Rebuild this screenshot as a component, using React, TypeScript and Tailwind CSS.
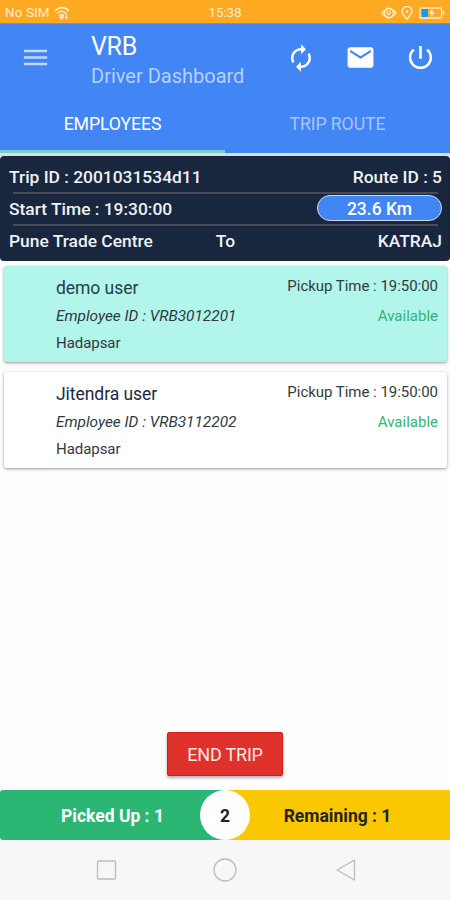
import type { ReactNode } from "react";
import { MdAutorenew, MdEmail, MdMenu, MdPowerSettingsNew } from "react-icons/md";

type Employee = {
  name: string;
  employeeId: string;
  stop: string;
  pickupTime: string;
  status: string;
  pickedUp: boolean;
};

const EMPLOYEES: Employee[] = [
  {
    name: "demo user",
    employeeId: "VRB3012201",
    stop: "Hadapsar",
    pickupTime: "19:50:00",
    status: "Available",
    pickedUp: true,
  },
  {
    name: "Jitendra user",
    employeeId: "VRB3112202",
    stop: "Hadapsar",
    pickupTime: "19:50:00",
    status: "Available",
    pickedUp: false,
  },
];

function StatusBar() {
  return (
    <div className="grid h-6 shrink-0 grid-cols-3 items-center border-b border-[#7b8fb0] bg-[#ffaa22] pt-0.5 pr-[5px] pl-[5px] text-[13.500px] leading-none text-[#ffedcb]">
      <div className="flex items-center gap-1">
        <span className="tracking-[0.1px]">No SIM</span>
        <svg width="16" height="14" viewBox="0 0 16 14" fill="none" stroke="currentColor" strokeWidth="1.6" aria-hidden="true">
          <path d="M1 5c4-4.500 10-4.500 14 0M3.200 7.500c2.800-3 6.300-3 9 0M5.400 9.800c1.500-1.500 3.300-1.500 4.600 0" />
          <path d="M6.300 11L7.700 12.800L9 11z" fill="currentColor" />
          <path d="M12.500 7.500v5M10.900 11l1.600 1.600L14 11" strokeWidth="1" />
        </svg>
      </div>
      <span className="text-center tracking-[-0.1px]">15:38</span>
      <div className="flex items-center justify-end gap-1">
        <svg width="16" height="14" viewBox="0 0 16 14" fill="none" stroke="currentColor" strokeWidth="1.3" aria-hidden="true">
          <circle cx="8" cy="7" r="4.700" strokeWidth="1.8" />
          <path d="M6.500 4.500v3c0 1.500 2.500 1.500 2.500 0V4.500M2.700 4.500L1 7l1.700 2.500M13.300 4.500L15 7l-1.700 2.500" />
        </svg>
        <svg width="12" height="14" viewBox="0 0 12 14" fill="none" stroke="currentColor" strokeWidth="1.4" aria-hidden="true">
          <path d="M6 13C3 9.500 1 7.800 1 5.500a5 5 0 0 1 10 0C11 7.800 9 9.500 6 13z" />
          <circle cx="6" cy="5.500" r="1.300" fill="currentColor" stroke="none" />
        </svg>
        <svg width="26" height="12" viewBox="0 0 26 12" fill="none" className="ml-0.5" aria-hidden="true">
          <rect x="1" y="1" width="21.500" height="10" rx="1" stroke="currentColor" strokeWidth="1.300" />
          <rect x="2.500" y="2" width="6.500" height="8" fill="#159bf3" />
          <path d="M13.500 2L9.500 6.500H12V10l4-4.500h-2.500z" fill="currentColor" />
          <path d="M24.500 4v4" stroke="currentColor" strokeWidth="1.500" />
        </svg>
      </div>
    </div>
  );
}

function Toolbar() {
  return (
    <header className="flex h-[70px] shrink-0 items-center pr-[14px] pb-[3px] pl-5 text-white">
      <MdMenu size={31} className="text-[#c4d9fd]" />
      <div className="ml-10 flex-1 pt-[7px]">
        <h1 className="text-[25px] leading-[30px] tracking-[-0.3px]">VRB</h1>
        <p className="text-[20px] leading-[28px] text-[#b8d0fd]">Driver Dashboard</p>
      </div>
      <div className="flex items-center gap-[30px]">
        <MdAutorenew size={30} />
        <MdEmail size={31} className="-mr-px -ml-px" />
        <MdPowerSettingsNew size={31} />
      </div>
    </header>
  );
}

function Tabs() {
  return (
    <nav className="grid h-[59px] shrink-0 grid-cols-2 text-center text-[17.700px] leading-[52px] tracking-[-0.1px]">
      <div className="border-b-[3px] border-[#7dcbd0] pt-1 text-white">EMPLOYEES</div>
      <div className="pt-1 text-[#a5c5fc]">TRIP ROUTE</div>
    </nav>
  );
}

function TripRow({ children }: { children: ReactNode }) {
  return <div className="flex h-[30px] items-center justify-between">{children}</div>;
}

function TripSummary() {
  return (
    <section className="h-[105px] shrink-0 rounded-[4px] bg-[#18263e] pt-1.5 pr-2 pl-[9px] text-[17.400px] font-medium text-[#f0f1f3]">
      <TripRow>
        <span>Trip ID : 2001031534d11</span>
        <span>Route ID : 5</span>
      </TripRow>
      <div className="mx-1 h-0.5 bg-[#454b58]" />
      <TripRow>
        <span>Start Time : 19:30:00</span>
        <span className="mb-[2px] h-[26px] w-[125px] rounded-full border border-[#cbdcfa] bg-[#4285f4] text-center text-[17.500px] leading-[26px] text-white">
          23.6 Km
        </span>
      </TripRow>
      <div className="mx-1 h-0.5 bg-[#454b58]" />
      <div className="grid h-[30px] grid-cols-[1fr_auto_1fr] items-center">
        <span>Pune Trade Centre</span>
        <span>To</span>
        <span className="text-right">KATRAJ</span>
      </div>
    </section>
  );
}

function EmployeeCard({ employee }: { employee: Employee }) {
  return (
    <article
      className={`flex h-24 justify-between rounded-[3px] pr-[9px] pl-[52px] shadow-[0_1px_3px_rgba(0,0,0,0.4)] ${
        employee.pickedUp ? "bg-[#b1f5eb]" : "bg-white"
      }`}
    >
      <div className="pt-2 text-[#30383e]">
        <h2
          className={`text-[17.500px] leading-[28px] tracking-[-0.05px] ${
            employee.pickedUp ? "text-[#24404a]" : "text-[#20284a]"
          }`}
        >
          {employee.name}
        </h2>
        <p className="text-[15.400px] leading-[28px] italic">Employee ID : {employee.employeeId}</p>
        <p className="text-[15px] leading-[26px] tracking-[-0.05px]">{employee.stop}</p>
      </div>
      <div className="pt-[7px] text-right text-[15px] text-[#333b40]">
        <p className="leading-[27px] tracking-[-0.03px]">Pickup Time : {employee.pickupTime}</p>
        <p className="pt-px leading-[31px] text-[#35b477]">{employee.status}</p>
      </div>
    </article>
  );
}

function TripTotals() {
  return (
    <div className="relative grid h-[50px] shrink-0 grid-cols-2 text-center text-[17.500px] leading-[48px] font-bold">
      <div className="rounded-l-[3px] bg-[#2bb673] pt-[2px] text-white">Picked Up : 1</div>
      <div className="bg-[#f9c802] pt-[2px] text-[#272312]">Remaining : 1</div>
      <div className="absolute left-1/2 h-[50px] w-[50px] -translate-x-1/2 rounded-full bg-white pt-[2px] text-[#202020]">
        2
      </div>
    </div>
  );
}

function NavigationBar() {
  return (
    <div className="flex h-[60px] shrink-0 items-center justify-center gap-[95px] bg-[#f7f7f7] text-[#bdbdbd]">
      <svg width="24" height="24" viewBox="0 0 24 24" fill="none" stroke="currentColor" strokeWidth="1.300" aria-hidden="true">
        <rect x="3.500" y="3" width="18" height="18" rx="1" />
      </svg>
      <svg width="24" height="24" viewBox="0 0 24 24" fill="none" stroke="currentColor" strokeWidth="1.300" aria-hidden="true">
        <circle cx="12" cy="12" r="11" />
      </svg>
      <svg width="24" height="24" viewBox="0 0 24 24" fill="none" stroke="currentColor" strokeWidth="1.300" strokeLinejoin="round" aria-hidden="true">
        <path d="M22.500 2v20L5 12z" />
      </svg>
    </div>
  );
}

export default function App() {
  return (
    <div className="flex h-[900px] w-[450px] flex-col overflow-hidden bg-[#fdfdfd] font-['Roboto',sans-serif]">
      <StatusBar />
      <div className="border-b-[3px] border-[#d9dfdf] bg-[#4285f4]">
        <Toolbar />
        <Tabs />
      </div>
      <TripSummary />
      <main className="flex flex-1 flex-col gap-[10px] pt-[5px] pr-[3px] pl-1">
        {EMPLOYEES.map((employee) => (
          <EmployeeCard key={employee.employeeId} employee={employee} />
        ))}
      </main>
      <div className="flex shrink-0 justify-center pb-[14px]">
        <button className="h-11 w-[116px] rounded-[2px] border border-[#d51c1c] bg-[#df322d] text-[18px] tracking-[-0.2px] text-[#ffe9e5] shadow-[0_2px_3px_rgba(0,0,0,0.3)]">
          END TRIP
        </button>
      </div>
      <TripTotals />
      <NavigationBar />
    </div>
  );
}
